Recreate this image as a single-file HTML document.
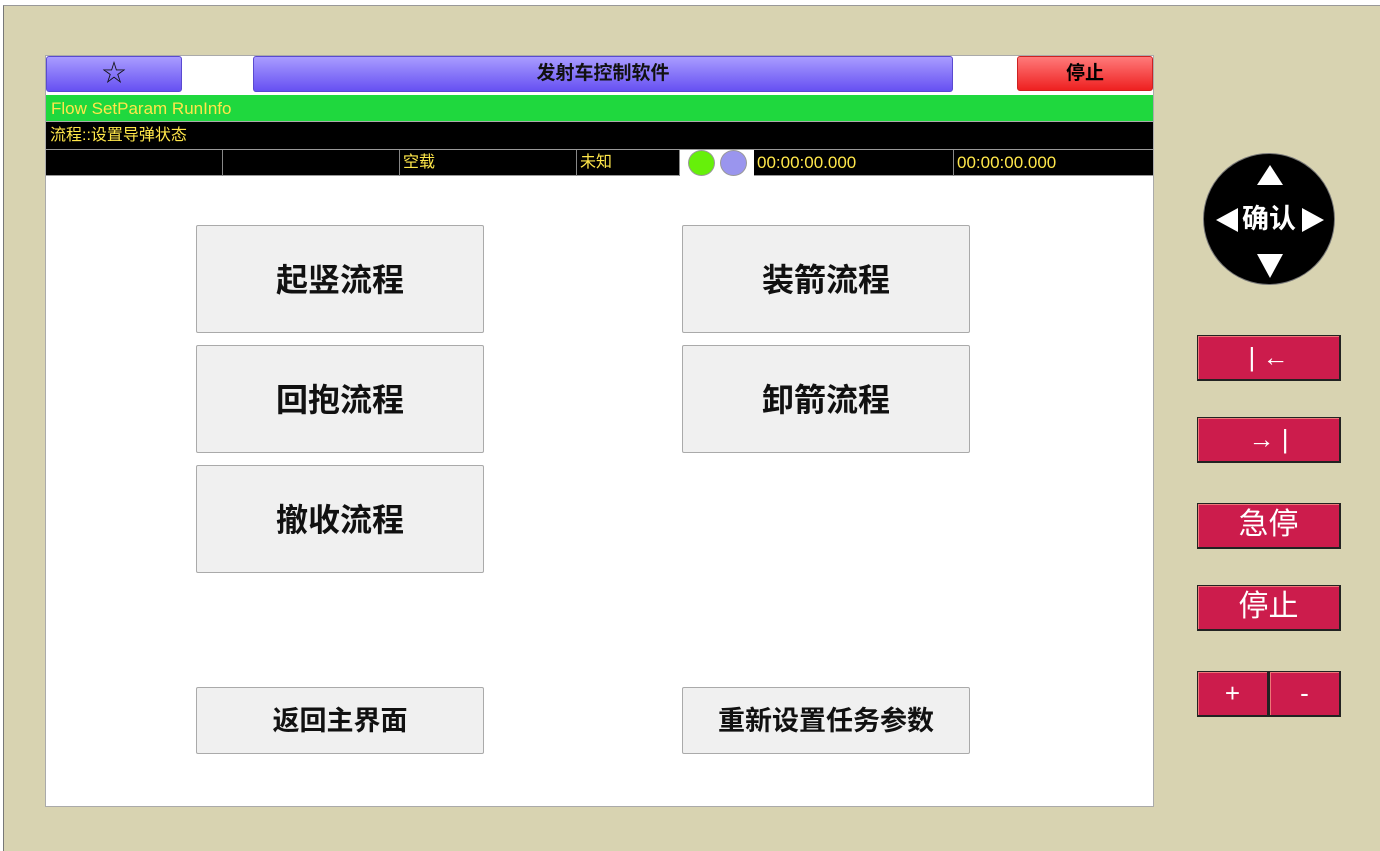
<!DOCTYPE html>
<html><head><meta charset="utf-8"><style>
*{box-sizing:border-box;margin:0;padding:0}
body{width:1380px;height:851px;background:#fff;position:relative;overflow:hidden;font-family:"Liberation Sans","Noto Sans CJK SC",sans-serif}
.frame{position:absolute;left:3px;top:5px;width:1377px;height:846px;background:#d8d3b1;border-left:1px solid #777;border-top:1px solid #999}
.abs{position:absolute}
.panel{left:45px;top:55px;width:1109px;height:752px;background:#fff;border:1px solid #aaa}
.pb{background:linear-gradient(#a99cff,#6650f2);border:1px solid #5a4ad0;border-radius:3px;text-align:center;font-weight:bold;font-size:19px;color:#111;line-height:34px}
.red{background:linear-gradient(#ff7a7a,#ee2020);border:1px solid #c22;border-radius:3px;text-align:center;font-weight:bold;font-size:19px;line-height:34px}
.row{left:46px;width:1107px;color:#ffe74a;font-size:15px}
.cell{position:absolute;top:0;height:26px;border-right:1px solid #888;padding-left:3px;line-height:26px;color:#ffe74a;font-size:16px}
.gb{background:#f0f0f0;border:1px solid #aaa;border-radius:2px;text-align:center;font-weight:bold;color:#111}
.rb{background:#cc1c4c;border:1px solid #222;border-right:2px solid #222;border-bottom:2px solid #222;color:#fff;text-align:center;font-size:30px;line-height:42px;box-shadow:inset 1px 1px 0 #e77}
.tri{position:absolute;width:0;height:0}
</style></head><body>
<div class="frame"></div>
<div class="abs panel"></div>
<div class="abs pb" style="left:46px;top:56px;width:136px;height:36px;font-weight:normal;font-size:24px;line-height:34px">☆</div>
<div class="abs pb" style="left:253px;top:56px;width:700px;height:36px">发射车控制软件</div>
<div class="abs red" style="left:1017px;top:56px;width:136px;height:35px">停止</div>
<div class="abs row" style="top:95px;height:27px;background:#1fd83e;line-height:27px;padding-left:5px;font-size:17px;border-bottom:1px solid #aaa">Flow SetParam RunInfo</div>
<div class="abs row" style="top:122px;height:27px;background:#000;line-height:27px;padding-left:4px;font-size:16px">流程::设置导弹状态</div>
<div class="abs row" style="top:149px;height:27px;background:#000;border-top:1px solid #999;border-bottom:1px solid #999">
<div class="cell" style="left:0;width:177px"></div>
<div class="cell" style="left:177px;width:177px"></div>
<div class="cell" style="left:354px;width:177px">空载</div>
<div class="cell" style="left:531px;width:103px">未知</div>
<div class="cell" style="left:634px;width:74px;background:#fff;border:none">
<div class="abs" style="left:8px;top:0px;width:27px;height:26px;border-radius:50%;background:#66f00a;border:1px solid #999"></div>
<div class="abs" style="left:40px;top:0px;width:27px;height:26px;border-radius:50%;background:#9a95ee;border:1px solid #999"></div></div>
<div class="cell" style="left:708px;width:200px;font-size:17px">00:00:00.000</div>
<div class="cell" style="left:908px;width:199px;border:none;font-size:17px">00:00:00.000</div>
</div>
<div class="abs gb" style="left:196px;top:225px;width:288px;height:108px;font-size:32px;line-height:108px">起竖流程</div>
<div class="abs gb" style="left:682px;top:225px;width:288px;height:108px;font-size:32px;line-height:108px">装箭流程</div>
<div class="abs gb" style="left:196px;top:345px;width:288px;height:108px;font-size:32px;line-height:108px">回抱流程</div>
<div class="abs gb" style="left:682px;top:345px;width:288px;height:108px;font-size:32px;line-height:108px">卸箭流程</div>
<div class="abs gb" style="left:196px;top:465px;width:288px;height:108px;font-size:32px;line-height:108px">撤收流程</div>
<div class="abs gb" style="left:196px;top:687px;width:288px;height:67px;font-size:27px;line-height:67px">返回主界面</div>
<div class="abs gb" style="left:682px;top:687px;width:288px;height:67px;font-size:27px;line-height:67px">重新设置任务参数</div>
<div class="abs" style="left:1203px;top:153px;width:132px;height:132px;border-radius:50%;background:#000;border:1px solid #777;color:#fff">
<div class="abs" style="left:0;width:130px;top:45px;text-align:center;font-size:27px;font-weight:bold;line-height:40px">确认</div>
<div class="tri" style="left:53px;top:11px;border-left:13px solid transparent;border-right:13px solid transparent;border-bottom:20px solid #fff"></div>
<div class="tri" style="left:53px;top:100px;border-left:13px solid transparent;border-right:13px solid transparent;border-top:24px solid #fff"></div>
<div class="tri" style="left:12px;top:54px;border-top:12px solid transparent;border-bottom:12px solid transparent;border-right:22px solid #fff"></div>
<div class="tri" style="left:98px;top:54px;border-top:12px solid transparent;border-bottom:12px solid transparent;border-left:22px solid #fff"></div>
</div>
<div class="abs rb" style="left:1197px;top:335px;width:144px;height:46px;font-size:26px">| ←</div>
<div class="abs rb" style="left:1197px;top:417px;width:144px;height:46px;font-size:26px">→ |</div>
<div class="abs rb" style="left:1197px;top:503px;width:144px;height:46px">急停</div>
<div class="abs rb" style="left:1197px;top:585px;width:144px;height:46px">停止</div>
<div class="abs rb" style="left:1197px;top:671px;width:72px;height:46px;font-size:26px">+</div>
<div class="abs rb" style="left:1269px;top:671px;width:72px;height:46px;font-size:26px">-</div>
</body></html>
